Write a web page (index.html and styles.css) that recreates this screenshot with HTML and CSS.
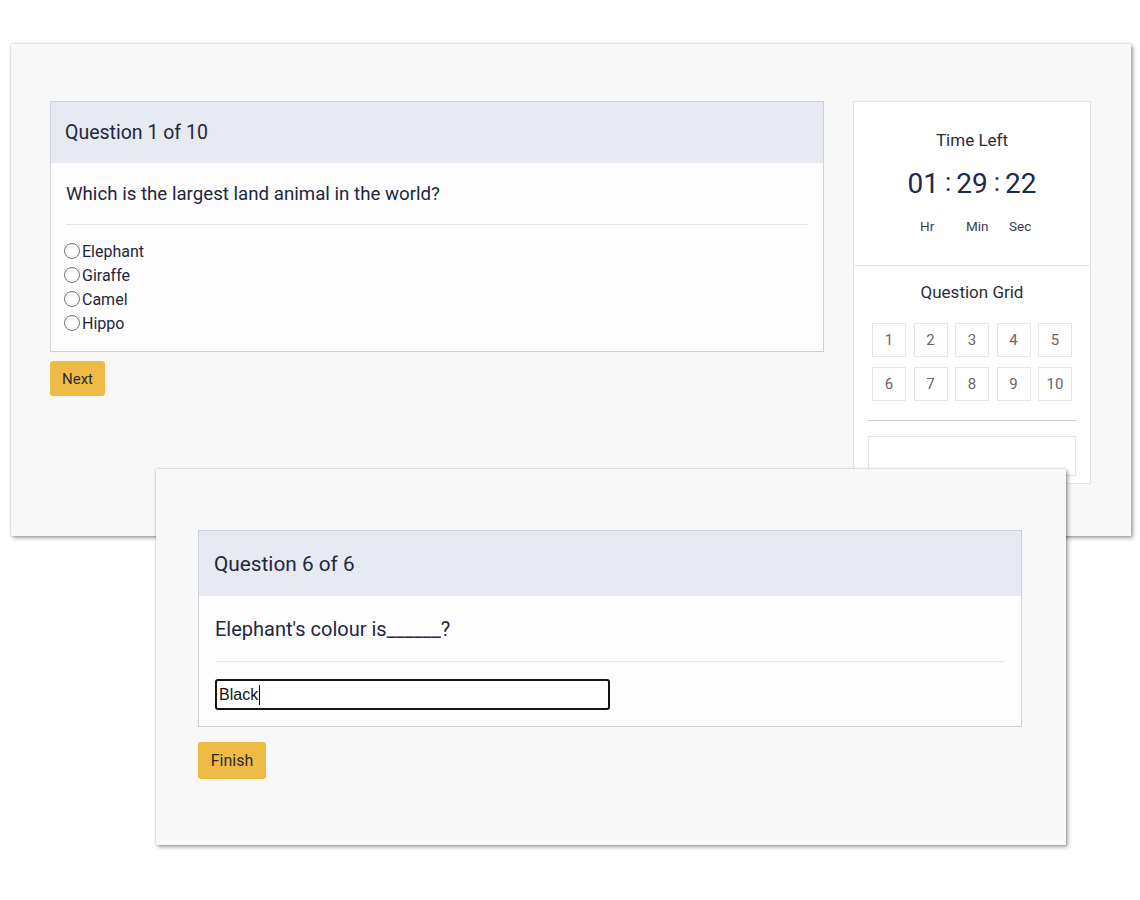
FILE: index.html
```html
<!DOCTYPE html>
<html lang="en">
<head>
<meta charset="utf-8">
<title>Quiz</title>
<link rel="stylesheet" href="styles.css">
</head>
<body>
<div class="desk">
  <section class="window win-a">
    <div class="quiz-main">
      <div class="card">
        <div class="card-head">Question 1 of 10</div>
        <div class="card-body">
          <p class="question">Which is the largest land animal in the world?</p>
          <ul class="options">
            <li><span class="radio"></span>Elephant</li>
            <li><span class="radio"></span>Giraffe</li>
            <li><span class="radio"></span>Camel</li>
            <li><span class="radio"></span>Hippo</li>
          </ul>
        </div>
      </div>
      <button class="btn btn-next">Next</button>
    </div>
    <aside class="side">
      <div class="timer-box">
        <div class="side-title">Time Left</div>
        <div class="timer">
          <span class="digits">01</span><span class="colon">:</span><span class="digits">29</span><span class="colon">:</span><span class="digits">22</span>
        </div>
        <div class="units">
          <span class="u-hr">Hr</span><span class="u-min">Min</span><span class="u-sec">Sec</span>
        </div>
      </div>
      <div class="grid-box">
        <div class="side-title">Question Grid</div>
        <div class="qgrid">
          <span class="cell">1</span><span class="cell">2</span><span class="cell">3</span><span class="cell">4</span><span class="cell">5</span>
          <span class="cell">6</span><span class="cell">7</span><span class="cell">8</span><span class="cell">9</span><span class="cell">10</span>
        </div>
        <div class="grid-rule"></div>
        <div class="empty-box"></div>
      </div>
    </aside>
  </section>

  <section class="window win-b">
    <div class="card card-b">
      <div class="card-head">Question 6 of 6</div>
      <div class="card-body">
        <p class="question">Elephant's colour is______?</p>
        <div class="answer">Black<span class="caret"></span></div>
      </div>
    </div>
    <button class="btn btn-finish">Finish</button>
  </section>
</div>
</body>
</html>
```

FILE: styles.css
```css
* { box-sizing: border-box; }

html, body {
  margin: 0;
  padding: 0;
  background: #ffffff;
}

body {
  font-family: Roboto, "Noto Sans", "Liberation Sans", sans-serif;
  color: #1f2640;
}

.desk {
  position: relative;
  width: 1140px;
  height: 900px;
}

.window {
  position: absolute;
  background: #f8f8f8;
  box-shadow: 0 0 2px rgba(0, 0, 0, 0.25), 2px 2px 4px rgba(0, 0, 0, 0.35);
}

.win-a {
  left: 11px;
  top: 44px;
  width: 1120px;
  height: 492px;
  padding: 57px 40px 0 39px;
  display: flex;
  gap: 29px;
  align-items: flex-start;
}

.win-b {
  left: 156px;
  top: 469px;
  width: 910px;
  height: 376px;
  padding: 61px 44px 0 42px;
}

.quiz-main {
  width: 774px;
}

.card {
  border: 1px solid #cdd0d9;
  background: #fdfdfd;
}

.card-head {
  height: 61px;
  background: #e7eaf3;
  padding: 0 14px;
  display: flex;
  align-items: center;
  font-size: 19.5px;
}

.card-body {
  padding: 18px 15px 16px 15px;
}

.question {
  margin: 0;
  font-size: 18.7px;
  line-height: 27px;
  padding-bottom: 16px;
  border-bottom: 1px solid #e5e5e8;
}

.options {
  list-style: none;
  margin: 0;
  padding: 14px 0 0 0;
}

.options li {
  display: flex;
  align-items: center;
  height: 24px;
  font-size: 16px;
  margin-left: -2px;
}

.radio {
  width: 16px;
  height: 16px;
  border: 1.5px solid #767676;
  border-radius: 50%;
  background: #fff;
  margin-right: 2px;
}

.btn {
  display: block;
  border: none;
  background: #efbb45;
  color: #2a2a2a;
  border-radius: 3px;
  font-family: Roboto, "Noto Sans", sans-serif;
  padding: 0;
}

.btn-next {
  margin-top: 9px;
  width: 55px;
  height: 35px;
  font-size: 15px;
}

/* sidebar */
.side {
  width: 238px;
  height: 383px;
  background: #ffffff;
  border: 1px solid #e3e3e3;
  overflow: hidden;
}

.timer-box {
  height: 164px;
  border-bottom: 1px solid #e6e6e6;
  padding-top: 27px;
  text-align: center;
}

.side-title {
  font-size: 17px;
  line-height: 22px;
  color: #2b2e38;
  text-align: center;
}

.timer {
  margin-top: 15px;
  display: flex;
  justify-content: center;
  align-items: baseline;
  font-size: 28px;
  line-height: 36px;
  color: #1b2a4e;
}

.colon {
  margin: 0 5px 0 6px;
  position: relative;
  top: -2px;
  font-size: 26px;
}

.units {
  margin-top: 16px;
  display: block;
  text-align: left;
  padding-left: 66px;
  font-size: 13.5px;
  color: #3a3d48;
  line-height: 16px;
}

.units span {
  display: inline-block;
}

.u-hr { width: 46px; }
.u-min { width: 43px; }

.grid-box {
  padding: 15px 14px 0 14px;
}

.qgrid {
  margin: 20px auto 0 auto;
  width: 200px;
  display: grid;
  grid-template-columns: repeat(5, 34px);
  column-gap: 7.5px;
  row-gap: 10px;
}

.cell {
  height: 34px;
  border: 1px solid #e6e6e6;
  display: flex;
  align-items: center;
  justify-content: center;
  font-size: 15px;
  color: #6e655c;
}

.grid-rule {
  margin-top: 19px;
  border-top: 1px solid #cfcfcf;
}

.empty-box {
  margin-top: 15px;
  height: 40px;
  border: 1px solid #e6e6e6;
}

/* second window */
.card-b {
  width: 824px;
}

.card-b .card-head {
  height: 65px;
  padding: 0 15px;
  font-size: 20.8px;
}

.card-b .card-body {
  padding: 18px 16px 16px 16px;
}

.card-b .question {
  font-size: 20px;
  line-height: 30px;
  padding-bottom: 17px;
}

.answer {
  margin-top: 17px;
  width: 395px;
  height: 31px;
  border: 2px solid #151515;
  border-radius: 3px;
  background: #fff;
  padding: 0 2px;
  display: flex;
  align-items: center;
  font-family: "Liberation Sans", Arial, sans-serif;
  font-size: 16px;
  color: #111;
}

.caret {
  display: inline-block;
  width: 1px;
  height: 20px;
  background: #000;
  margin-left: 1px;
}

.btn-finish {
  margin-top: 15px;
  width: 68px;
  height: 37px;
  font-size: 16px;
}
```
